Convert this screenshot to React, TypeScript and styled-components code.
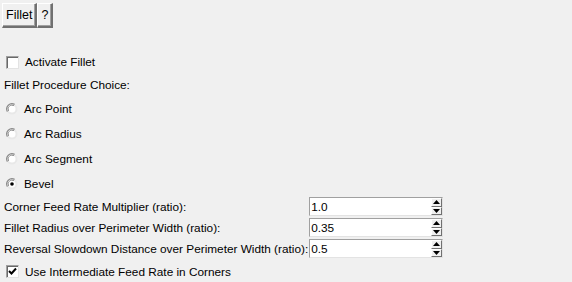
import React from "react";
import styled, { createGlobalStyle } from "styled-components";

const GlobalStyle = createGlobalStyle`
	html, body {
		margin: 0;
		padding: 0;
		background: #f0f0f0;
	}
	body {
		font-family: "Liberation Sans", Arial, sans-serif;
		font-size: 11.8px;
		color: #000;
	}
`;

const fields = [
	{ label: "Corner Feed Rate Multiplier (ratio):", value: "1.0" },
	{ label: "Fillet Radius over Perimeter Width (ratio):", value: "0.35" },
	{ label: "Reversal Slowdown Distance over Perimeter Width (ratio):", value: "0.5" },
];

const choices = ["Arc Point", "Arc Radius", "Arc Segment", "Bevel"];

const Radio: React.FC<{ checked?: boolean }> = ({ checked }) => (
	<RadioIcon width="12" height="12" viewBox="0 0 12 12">
		<circle cx="6" cy="6" r="5.5" fill="#e8e8e8" />
		<path d="M1.4 8.6 A5.3 5.3 0 0 1 8.6 1.4" stroke="#8a8a8a" strokeWidth="1.2" fill="none" />
		<path d="M2.6 7.8 A4 4 0 0 1 7.8 2.6" stroke="#555" strokeWidth="1" fill="none" />
		<circle cx="6" cy="6" r="3.5" fill="#fff" />
		{checked && <circle cx="6" cy="6" r="1.8" fill="#000" />}
	</RadioIcon>
);

const Spinner: React.FC = () => (
	<SpinBox>
		<SpinButton>
			<svg width="7" height="4" viewBox="0 0 7 4">
				<path d="M3.5 0 L7 4 L0 4 Z" fill="#000" />
			</svg>
		</SpinButton>
		<SpinButton>
			<svg width="7" height="4" viewBox="0 0 7 4">
				<path d="M0 0 L7 0 L3.5 4 Z" fill="#000" />
			</svg>
		</SpinButton>
	</SpinBox>
);

export default function App() {
	return (
		<Page>
			<GlobalStyle />
			<Toolbar>
				<TabButton>Fillet</TabButton>
				<TabButton>?</TabButton>
			</Toolbar>
			<Form>
				<CheckRow>
					<CheckBox />
					<span>Activate Fillet</span>
				</CheckRow>
				<GroupLabel>Fillet Procedure Choice:</GroupLabel>
				{choices.map((c) => (
					<RadioRow key={c}>
						<Radio checked={c === "Bevel"} />
						<span>{c}</span>
					</RadioRow>
				))}
				<FieldGrid>
					{fields.map((f) => (
						<React.Fragment key={f.label}>
							<FieldLabel>{f.label}</FieldLabel>
							<Entry>
								<EntryText>{f.value}</EntryText>
								<Spinner />
							</Entry>
						</React.Fragment>
					))}
				</FieldGrid>
				<CheckRow $last>
					<CheckBox>
						<svg width="9" height="9" viewBox="0 0 9 9">
							<path d="M1 4 L3.5 6.5 L8 1.5" stroke="#000" strokeWidth="2" fill="none" />
						</svg>
					</CheckBox>
					<span>Use Intermediate Feed Rate in Corners</span>
				</CheckRow>
			</Form>
		</Page>
	);
}

const Page = styled.div`
	width: 572px;
	height: 282px;
	overflow: hidden;
	background: #f0f0f0;
`;

const Toolbar = styled.div`
	display: flex;
	height: 28px;
	padding: 3px 0 0 2px;
	box-sizing: border-box;
`;

const TabButton = styled.div`
	height: 25px;
	box-sizing: border-box;
	padding: 0 3px;
	font-size: 12.5px;
	display: flex;
	align-items: center;
	border-top: 1px solid #fff;
	border-left: 1px solid #fff;
	border-right: 2px solid #707070;
	border-bottom: 2px solid #707070;
	background: #f0f0f0;
	box-shadow: inset -1px -1px 0 #a0a0a0;
`;

const Form = styled.div`
	display: flex;
	flex-direction: column;
	padding: 23px 0 0 4px;
`;

const CheckRow = styled.div<{ $last?: boolean }>`
	display: flex;
	align-items: center;
	gap: 6px;
	height: ${(p) => (p.$last ? 25 : 22)}px;
	padding-left: 2px;
`;

const CheckBox = styled.div`
	width: 13px;
	height: 13px;
	box-sizing: border-box;
	background: #fff;
	border-top: 1px solid #a0a0a0;
	border-left: 1px solid #a0a0a0;
	border-right: 1px solid #e3e3e3;
	border-bottom: 1px solid #e3e3e3;
	box-shadow: inset 1px 1px 0 #696969;
	display: flex;
	align-items: center;
	justify-content: center;
`;

const GroupLabel = styled.div`
	height: 23px;
	display: flex;
	align-items: center;
`;

const RadioRow = styled.div`
	display: flex;
	align-items: center;
	gap: 6px;
	height: 25px;
	padding-left: 2px;
`;

const RadioIcon = styled.svg`
	flex: none;
`;

const FieldGrid = styled.div`
	display: grid;
	grid-template-columns: max-content 134px;
	grid-auto-rows: 21px;
	column-gap: 1px;
	align-items: center;
`;

const FieldLabel = styled.div`
	white-space: nowrap;
`;

const Entry = styled.div`
	height: 19px;
	box-sizing: border-box;
	background: #fff;
	border-top: 1px solid #a0a0a0;
	border-left: 1px solid #a0a0a0;
	border-right: 1px solid #e3e3e3;
	border-bottom: 1px solid #e3e3e3;
	display: flex;
	align-items: center;
	padding-left: 1px;
`;

const EntryText = styled.span`
	flex: 1;
	color: #000;
`;

const SpinBox = styled.div`
	display: flex;
	flex-direction: column;
	width: 11px;
	height: 17px;
`;

const SpinButton = styled.div`
	flex: 1;
	box-sizing: border-box;
	background: #f0f0f0;
	border-top: 1px solid #fff;
	border-left: 1px solid #fff;
	border-right: 1px solid #707070;
	border-bottom: 1px solid #707070;
	display: flex;
	align-items: center;
	justify-content: center;
`;
